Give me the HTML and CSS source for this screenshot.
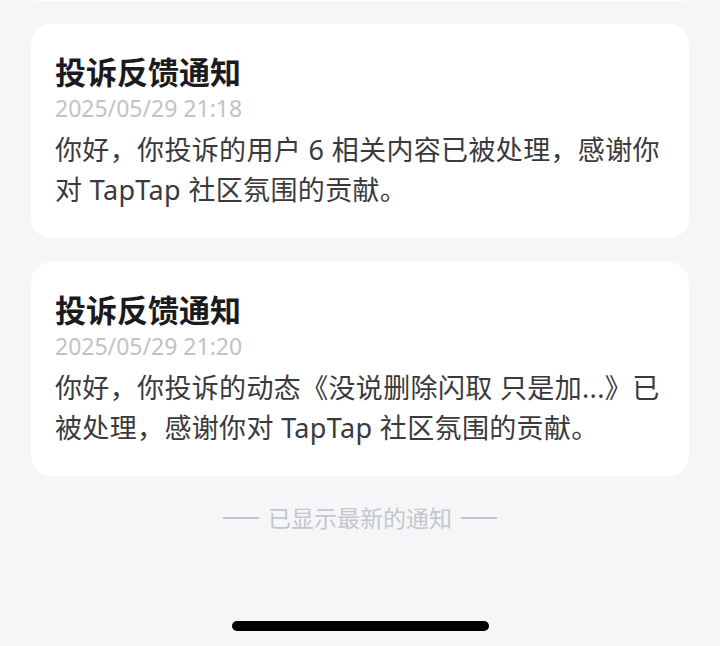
FILE: index.html
```html
<!DOCTYPE html>
<html lang="zh-CN">
<head>
<meta charset="utf-8">
<link rel="stylesheet" href="styles.css">
</head>
<body>
<div class="page">
  <div class="remnant"></div>
  <div class="card">
    <div class="title">投诉反馈通知</div>
    <div class="date">2025/05/29 21:18</div>
    <div class="body">你好，你投诉的用户 6 相关内容已被处理，感谢你对 TapTap 社区氛围的贡献。</div>
  </div>
  <div class="card">
    <div class="title">投诉反馈通知</div>
    <div class="date">2025/05/29 21:20</div>
    <div class="body">你好，你投诉的动态《没说删除闪取 只是加...》已被处理，感谢你对 TapTap 社区氛围的贡献。</div>
  </div>
  <div class="footer"><span class="dash"></span><span class="ftext">已显示最新的通知</span><span class="dash"></span></div>
  <div class="home"><div class="bar"></div></div>
</div>
</body>
</html>
```
FILE: styles.css
```css
html, body {
  margin: 0;
  padding: 0;
  background: #f5f6f8;
}
body {
  font-family: "Noto Sans", "Noto Sans CJK SC", sans-serif;
  width: 720px;
  height: 646px;
  overflow: hidden;
}
.page {
  padding: 0 31px;
  display: flex;
  flex-direction: column;
}
.remnant {
  height: 1px;
  margin: 0 4px;
  background: #ffffff;
}
.card {
  background: #ffffff;
  border-radius: 20px;
  padding: 28px 24px 28px 24px;
  margin-top: 23px;
}
.card + .card {
  margin-top: 24px;
}
.title {
  font-size: 31px;
  line-height: 40px;
  font-weight: 700;
  color: #1b1b1d;
}
.date {
  font-size: 23px;
  line-height: 30px;
  color: #c2c2c6;
  margin-top: 1px;
}
.body {
  margin-top: 7px;
  font-size: 27px;
  line-height: 40px;
  letter-spacing: 0.35px;
  color: #3a3a3c;
}
.footer {
  margin-top: 27px;
  display: flex;
  justify-content: center;
  align-items: center;
  gap: 9px;
  height: 30px;
}
.ftext {
  font-size: 23px;
  line-height: 30px;
  color: #c4c6cc;
}
.dash {
  width: 36px;
  height: 2px;
  background: #c4c6cc;
}
.home {
  margin-top: 88px;
  display: flex;
  justify-content: center;
}
.bar {
  width: 257px;
  height: 10px;
  border-radius: 5px;
  background: #000000;
}
```
